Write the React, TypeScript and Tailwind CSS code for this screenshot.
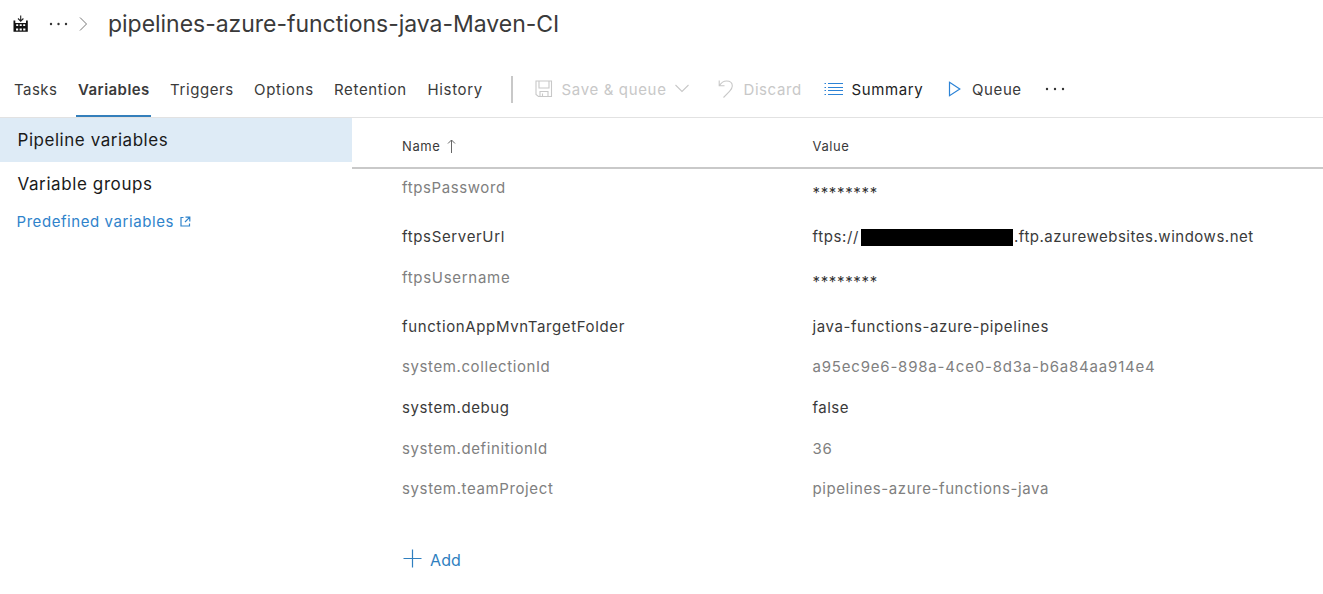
import type { ReactNode } from "react";

type Row = { name: string; value: ReactNode; muted?: boolean; nameCls: string; valueCls: string; rowCls: string };

const rows: Row[] = [
  { name: "ftpsPassword", value: "********", muted: true, nameCls: "tracking-[0.6px]", valueCls: "tracking-[0.65px] pt-[5px] text-[#333]", rowCls: "h-[49px]" },
  {
    name: "ftpsServerUrl",
    value: (
      <span className="flex items-center">
        <span className="w-[48px] tracking-[0.62px]">ftps://</span>
        <span className="h-[17px] w-[152px] bg-black" />
        <span className="pl-[1.5px]">.ftp.azurewebsites.windows.net</span>
      </span>
    ),
    nameCls: "tracking-[0.65px]",
    valueCls: "tracking-[0.52px]",
    rowCls: "h-[41px]",
  },
  { name: "ftpsUsername", value: "********", muted: true, nameCls: "tracking-[0.7px]", valueCls: "tracking-[0.65px] pt-[4px] text-[#333]", rowCls: "h-[49px]" },
  { name: "functionAppMvnTargetFolder", value: "java-functions-azure-pipelines", nameCls: "tracking-[0.63px]", valueCls: "tracking-[0.59px]", rowCls: "h-[40px]" },
  { name: "system.collectionId", value: "a95ec9e6-898a-4ce0-8d3a-b6a84aa914e4", muted: true, nameCls: "tracking-[0.6px]", valueCls: "tracking-[0.8px]", rowCls: "h-[41px]" },
  { name: "system.debug", value: "false", nameCls: "tracking-[0.6px]", valueCls: "tracking-[0.5px]", rowCls: "h-[41px]" },
  { name: "system.definitionId", value: "36", muted: true, nameCls: "tracking-[0.6px]", valueCls: "tracking-[0.8px]", rowCls: "h-[40px]" },
  { name: "system.teamProject", value: "pipelines-azure-functions-java", muted: true, nameCls: "tracking-[0.62px]", valueCls: "tracking-[0.59px]", rowCls: "h-[41px]" },
];

const tabs = [
  { label: "Tasks", cls: "w-[64px] tracking-[0.45px]" },
  { label: "Variables", cls: "w-[92px] font-semibold tracking-[0.45px]", active: true },
  { label: "Triggers", cls: "w-[84px] tracking-[0.6px]" },
  { label: "Options", cls: "w-[80px] tracking-[0.7px]" },
  { label: "Retention", cls: "w-[93.5px] tracking-[0.65px]" },
  { label: "History", cls: "w-[83.5px] tracking-[0.65px]" },
];

function BuildIcon() {
  return (
    <svg width="16" height="18" viewBox="0 0 16 18" fill="none" className="shrink-0">
      <path d="M7.7 0.5V6M5 3.5L7.7 6.2L10.4 3.5" stroke="#222" strokeWidth="1.1" />
      <path d="M0.5 5.5H2.3V8H13V5.5H14.8V16.8H0.5Z" fill="#111" />
      <path d="M3.2 9.2h2v1.8h-2zM6.7 9.2h2v1.8h-2zM10.2 9.2h2v1.8h-2zM3 13.6h2.2v2H3zM6.6 13.6h2.2v2H6.6zM10.2 13.6h2.2v2h-2.2z" fill="#fff" />
    </svg>
  );
}

function Dots({ cls, gap }: { cls: string; gap: number }) {
  return (
    <svg width="22" height="4" viewBox="0 0 22 4" className={cls}>
      <circle cx="2" cy="2" r="1.2" fill="#333" />
      <circle cx={2 + gap} cy="2" r="1.2" fill="#333" />
      <circle cx={2 + gap * 2} cy="2" r="1.2" fill="#333" />
    </svg>
  );
}

export default function App() {
  return (
    <div className="h-[594px] w-[1323px] overflow-hidden bg-white font-['Inter',sans-serif] text-[15px] leading-[20px] text-[#3a3a3a]">
      <header className="flex h-[48px] items-center pl-[13px]">
        <BuildIcon />
        <Dots cls="ml-[20px] shrink-0" gap={7.5} />
        <svg width="10" height="16" viewBox="0 0 10 16" fill="none" className="ml-[8px] shrink-0">
          <path d="M1 1.5L7.5 8L1 14.5" stroke="#777" strokeWidth="1" />
        </svg>
        <h1 className="ml-[19px] whitespace-nowrap text-[23px] leading-[30px] tracking-[-0.03px]">pipelines-azure-functions-java-Maven-CI</h1>
      </header>

      <nav className="flex h-[70px] items-end border-b border-[#e2e2e2] pl-[14px] whitespace-nowrap">
        {tabs.map((t) => (
          <div key={t.label} className={`flex h-[56px] shrink-0 items-center ${t.cls}`}>
            {t.active ? (
              <span className="-ml-[2px] flex h-[56px] w-[75px] items-center border-b-2 border-[#347fbb] pt-[4px] pl-[2px]">{t.label}</span>
            ) : (
              <span className="pt-[2px]">{t.label}</span>
            )}
          </div>
        ))}
        <div className="flex h-[56px] items-center">
          <span className="h-[27px] w-[1.5px] bg-[#c8c8c8]" />
          <svg width="18" height="18" viewBox="0 0 18 18" fill="none" stroke="#c8c8c8" strokeWidth="1.1" className="ml-[22px]">
            <path d="M1 1H16.5V16.5H3.5L1 14.5ZM4 1V8H14V1M5 16.5V11.5H13V16.5M7.5 16V13.5" />
          </svg>
          <span className="ml-[9px] w-[113px] pt-[2px] tracking-[0.65px] text-[#c8c8c8]">Save &amp; queue</span>
          <svg width="14" height="9" viewBox="0 0 14 9" fill="none" stroke="#c8c8c8" strokeWidth="1.1" className="mb-[2px]">
            <path d="M0.5 1L7 7.5L13.5 1" />
          </svg>
          <svg width="16" height="20" viewBox="0 0 16 20" fill="none" stroke="#c8c8c8" strokeWidth="1.1" className="ml-[29px]">
            <path d="M1.2 1.5V6.8H6.5M1.5 6.5C3 4 5.5 2 8.5 2C12 2 14.3 4 14.3 7C14.3 9.3 13 10.8 11.5 12.3L5.5 18.5" />
          </svg>
          <span className="ml-[10px] w-[80px] pt-[2px] tracking-[0.58px] text-[#c8c8c8]">Discard</span>
          <svg width="20" height="14" viewBox="0 0 20 14" stroke="#2c83d6" strokeWidth="1.2">
            <path d="M4 1.5H19M4 5.5H19M4 8.5H19M4 12.5H19M0.5 1.5H2M0.5 5.5H2M0.5 8.5H2M0.5 12.5H2" />
          </svg>
          <span className="ml-[8px] w-[96.5px] pt-[2px] tracking-[0.6px] text-[#222]">Summary</span>
          <svg width="14" height="16" viewBox="0 0 14 16" fill="none" stroke="#2c83d6" strokeWidth="1.2">
            <path d="M1.5 1.3L11.8 8L1.5 14.7Z" />
          </svg>
          <span className="ml-[10px] w-[72.5px] pt-[2px] tracking-[0.6px]">Queue</span>
          <Dots cls="" gap={8} />
        </div>
      </nav>

      <div className="flex">
        <aside className="w-[352px] shrink-0 whitespace-nowrap text-[#1a1a1a]">
          <div className="flex h-[44px] items-center bg-[#deebf6] pl-[17.5px] text-[17px] tracking-[0.54px]">Pipeline variables</div>
          <div className="flex h-[43px] items-center pl-[17.5px] text-[17px] tracking-[0.6px]">Variable groups</div>
          <a className="flex h-[33px] items-center pl-[16.5px] tracking-[0.57px] text-[#2f83cb]">
            <span className="w-[163px]">Predefined variables</span>
            <svg width="11" height="11" viewBox="0 0 11 11" fill="none" stroke="#2f83cb" strokeWidth="1.2">
              <path d="M3.5 1.5H1V10H9.5V7.5M5.5 1.2H9.8V5.5M9.8 1.2L5 6" />
            </svg>
          </a>
        </aside>
        <main className="flex-1 whitespace-nowrap">
          <div className="flex h-[51px] items-center border-b-2 border-[#c9c9c9] pt-[7px] pl-[50px] text-[13px]">
            <div className="flex w-[410.5px] items-center">
              <span className="w-[45px] tracking-[0.6px]">Name</span>
              <svg width="9" height="14" viewBox="0 0 9 14" fill="none" stroke="#666" strokeWidth="1">
                <path d="M4.5 14V1M1 4.5L4.5 1L8 4.5" />
              </svg>
            </div>
            <span className="tracking-[0.6px]">Value</span>
          </div>
          {rows.map((r) => (
            <div key={r.name} className={`flex items-start pt-[9px] pl-[50px] ${r.rowCls} ${r.muted ? "text-[#808080]" : "text-[#3a3a3a]"}`}>
              <span className={`w-[410.5px] ${r.nameCls}`}>{r.name}</span>
              <span className={r.valueCls}>{r.value}</span>
            </div>
          ))}
          <button className="mt-[31px] flex h-[36px] items-center pl-[50.5px] text-[#2f7fbf]">
            <svg width="19" height="19" viewBox="0 0 19 19" stroke="#2f7fbf" strokeWidth="1.2" className="mb-[4px]">
              <path d="M9.5 0.5V18.5M0.5 9.5H18.5" />
            </svg>
            <span className="ml-[8.5px] text-[16px] tracking-[0.1px]">Add</span>
          </button>
        </main>
      </div>
    </div>
  );
}
